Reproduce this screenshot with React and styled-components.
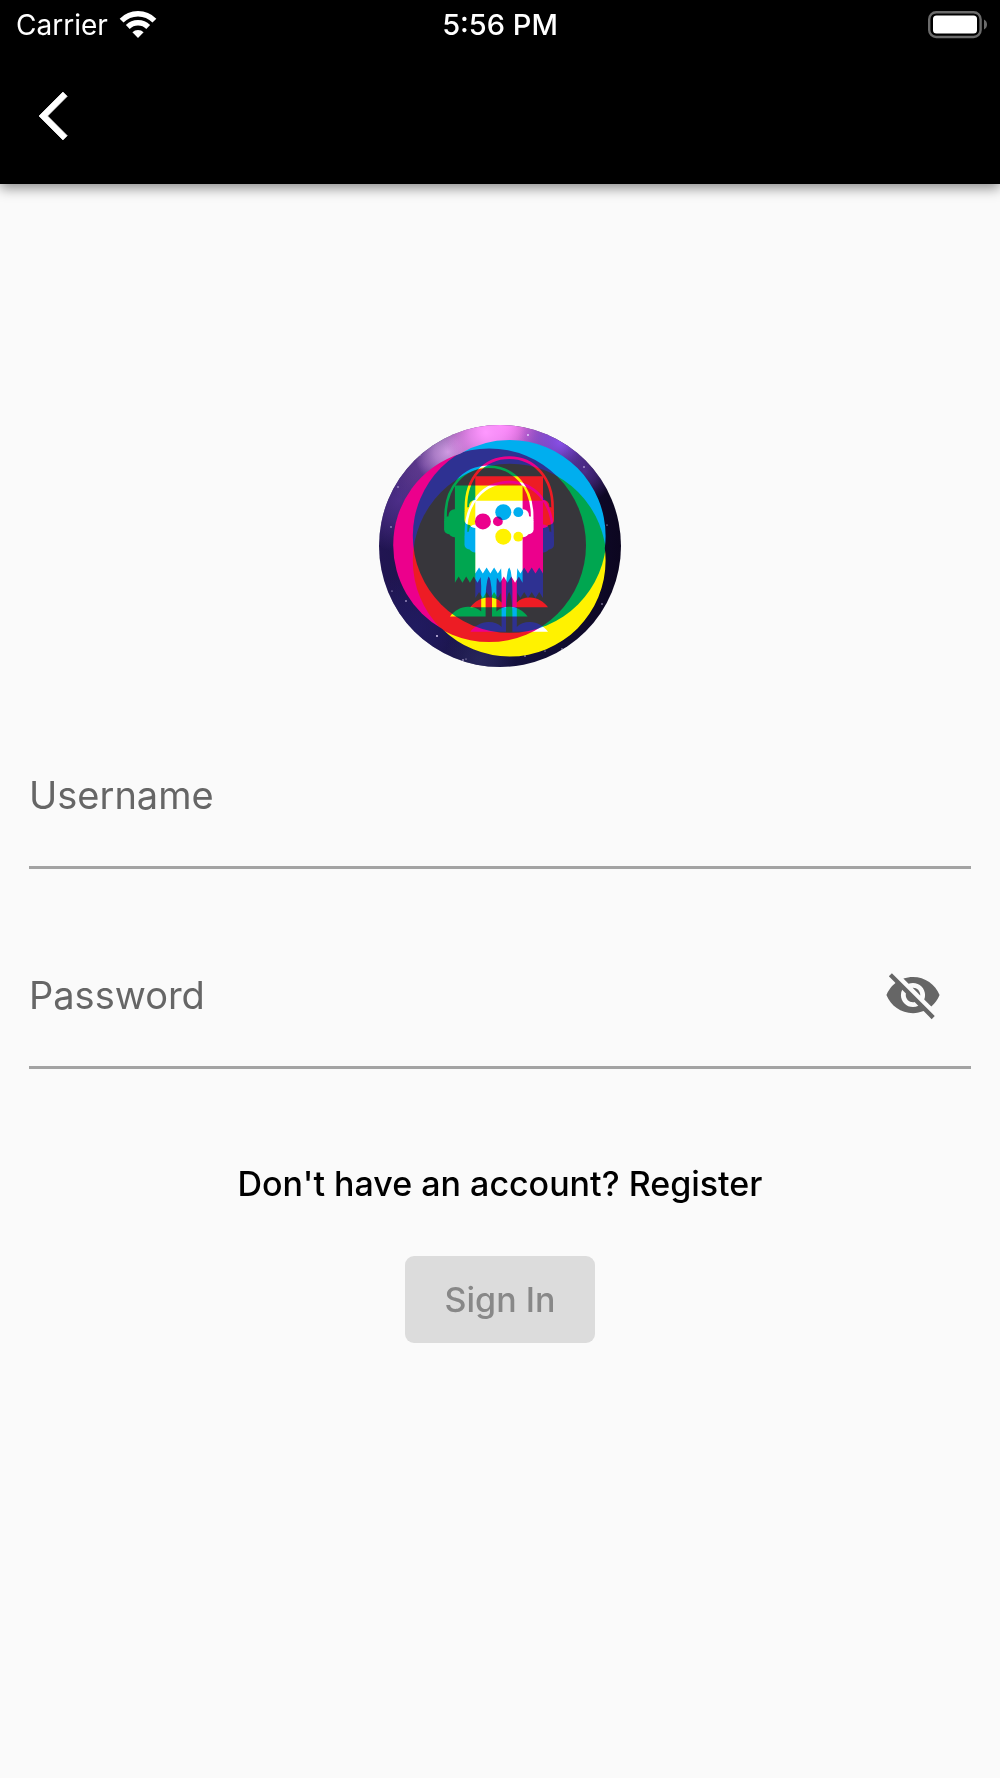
import { useState } from 'react'
import styled, { createGlobalStyle } from 'styled-components'
import { MdVisibility, MdVisibilityOff } from 'react-icons/md'

const GlobalStyle = createGlobalStyle`
  * {
    box-sizing: border-box;
  }
  body {
    margin: 0;
    background: #fafafa;
    font-family: Inter, 'Liberation Sans', sans-serif;
  }
`

const Page = styled.div`
  min-height: 100vh;
  background: #fafafa;
`

const Header = styled.header`
  height: 184px;
  background: #000;
  color: #fff;
  box-shadow: 0 4px 12px rgba(0, 0, 0, 0.45);
`

const StatusBar = styled.div`
  display: grid;
  grid-template-columns: 1fr auto 1fr;
  align-items: center;
  height: 50px;
  padding: 0 12px;
  font-size: 28px;
  line-height: 36px;
`

const Carrier = styled.div`
  display: flex;
  align-items: center;
  gap: 11px;
  padding-left: 4px;
`

const Time = styled.time`
  font-size: 29px;
  font-weight: 500;
`

const Battery = styled.svg`
  justify-self: end;
`

const NavBar = styled.nav`
  display: flex;
  align-items: center;
  height: 132px;
  padding: 0 39px;
`

const IconButton = styled.button`
  display: flex;
  padding: 0;
  border: 0;
  background: none;
  color: ${({ $color }) => $color};
  cursor: pointer;
`

const Form = styled.form`
  display: flex;
  flex-direction: column;
  align-items: center;
  padding: 241px 29px 80px;
`

const Logo = styled.svg`
  display: block;
  width: 242px;
  height: 242px;
  margin-bottom: 67px;
`

const InkLayer = styled.g`
  mix-blend-mode: plus-lighter;
`

const Field = styled.div`
  display: grid;
  grid-template-columns: 1fr auto;
  align-items: center;
  width: 100%;
  height: 135px;
  margin-bottom: 65px;
  padding: 0 29px 10px 0;
  border-bottom: 3px solid #a3a3a3;
  font-size: 38px;
  line-height: 48px;
`

const Label = styled.label`
  grid-area: 1 / 1;
  color: #666;
  visibility: ${({ $filled }) => ($filled ? 'hidden' : 'visible')};
`

const Input = styled.input`
  grid-area: 1 / 1;
  width: 100%;
  padding: 0;
  border: 0;
  outline: 0;
  background: none;
  color: #222;
  font: inherit;
`

const RegisterLink = styled.a`
  margin-top: 30px;
  color: #000;
  font-size: 34px;
  font-weight: 500;
  line-height: 40px;
  text-decoration: none;
`

const SubmitButton = styled.button`
  height: 87px;
  margin-top: 52px;
  padding: 0 40px;
  border: 0;
  border-radius: 9px;
  background: #dcdcdc;
  color: #888;
  font: inherit;
  font-size: 34px;
  font-weight: 500;
`

const WifiIcon = () => (
  <svg width="38" height="28" viewBox="0 0 38 28" fill="none" stroke="#fff" strokeWidth="5.4">
    <path d="M2.6 9.6a23 23 0 0 1 32.8 0" />
    <path d="M8.8 16a14.4 14.4 0 0 1 20.4 0" />
    <path d="M13.4 21.2a8 8 0 0 1 11.2 0L19 27z" fill="#fff" stroke="none" />
  </svg>
)

const BatteryIcon = () => (
  <Battery width="60" height="28" viewBox="0 0 60 28" role="img" aria-label="Battery full">
    <rect x="1.2" y="1.2" width="51.4" height="24.8" rx="7" fill="none" stroke="#6b6b6b" strokeWidth="2.4" />
    <rect x="5" y="4.5" width="44" height="18" rx="3.5" fill="#fff" />
    <path d="M56 8.5v10q3-1.6 3-5t-3-5z" fill="#6b6b6b" />
  </Battery>
)

const BackIcon = () => (
  <svg width="58" height="58" viewBox="0 0 24 24" fill="currentColor">
    <path d="M11.67 3.87 9.9 2.1 0 12l9.9 9.9 1.77-1.77L3.54 12z" stroke="currentColor" strokeWidth="0.3" />
  </svg>
)

// one figure per ink, each shifted and cut out of its own disc
const inks = {
  r: { dx: 0, dy: 0 },
  g: { dx: -20.4, dy: 9.2 },
  b: { dx: 0, dy: 24.5 },
}

const teeth = Array.from({ length: 9 }, (_, i) => {
  const x = 543 - i * 7.52
  return `L${x} 573.6L${x - 3.76} 567.4`
}).join('')

const Leg = () => (
  <path d="M500.6 560H508.6V567Q506 577 506 590V607.2H470.4C475 601.5 481 597.6 488.5 597.6C494 597.6 498.5 599.6 501.6 602.4V577z" />
)

const Figure = ({ color, hole }) => (
  <>
    <g fill={color}>
      <path d={`M475.3 476.3H543${teeth}L475.3 573.6z`} />
      <rect x="469" y="500" width="14" height="28" rx="6" />
      <rect x="464.5" y="507" width="14" height="18" rx="5" />
      <rect x="535.4" y="500" width="14" height="28" rx="6" />
      <rect x="540" y="507" width="14" height="18" rx="5" />
      <Leg />
      <g transform="matrix(-1 0 0 1 1018.4 0)">
        <Leg />
      </g>
    </g>
    <path
      d="M466 511C464.5 477 485 457.6 509.2 457.6S554 477 552.5 511"
      fill="none"
      stroke={color}
      strokeWidth="2.6"
    />
    <circle cx="503.3" cy="512.2" r="8" fill={hole} />
    <circle cx="518.3" cy="512.2" r="4.9" fill={hole} />
  </>
)

const InkMask = ({ id, dx, dy, on, off }) => (
  <mask id={id} maskUnits="userSpaceOnUse" x="379" y="425" width="242" height="242">
    <rect x="379" y="425" width="242" height="242" fill={on} />
    <g transform={`translate(${dx} ${dy})`}>
      <circle cx="509.6" cy="536" r="96.8" fill={off} />
      <Figure color={on} hole={off} />
    </g>
  </mask>
)

const overlaps = [
  ['', '#37363b'],
  ['r', '#ed1c24'],
  ['g', '#00a650'],
  ['b', '#2e3192'],
  ['rg', '#fff200'],
  ['gb', '#00aeef'],
  ['rb', '#ec008c'],
  ['rgb', '#ffffff'],
]

const Overlap = ({ keys, color }) => (
  <InkLayer>
    {Object.keys(inks).reduce(
      (child, key) => <g mask={`url(#${keys.includes(key) ? 'ink' : 'no'}-${key})`}>{child}</g>,
      <rect x="379" y="425" width="242" height="242" fill={color} />
    )}
  </InkLayer>
)

const glows = [
  [400, 500, 52, '#52318f', 0.9],
  [425, 465, 42, '#694099', 0.9],
  [448, 452, 34, '#e0a8f0', 0.9],
  [505, 424, 66, '#ff7dfa', 1],
  [486, 432, 40, '#ff98ff', 1],
  [560, 442, 42, '#8950e8', 1],
  [585, 472, 30, '#5a329c', 0.8],
  [415, 627, 55, '#211b62', 0.9],
  [480, 660, 36, '#2d2c63', 0.7],
]

const stars = [
  [391, 527, 0.7], [406, 601, 0.8], [437, 636, 0.9], [398, 487, 0.7], [528, 435, 0.9],
  [584, 467, 0.8], [607, 525, 0.6], [602, 604, 0.7], [562, 649, 0.7], [525, 656, 0.7],
  [463, 660, 0.8], [466, 659, 0.6], [392, 591, 0.6], [420, 455, 0.6], [545, 651, 0.6],
]

const BandLogo = () => (
  <Logo viewBox="379 425 242 242" role="img" aria-label="Logo">
    <defs>
      <clipPath id="badge">
        <circle cx="500" cy="546" r="121" />
      </clipPath>
      <clipPath id="discs">
        <circle cx="489.2" cy="545.2" r="96" />
        <circle cx="509.6" cy="536" r="96" />
        <circle cx="509.6" cy="560.5" r="96" />
      </clipPath>
      <linearGradient id="space" x1="0" y1="0" x2="1" y2="0">
        <stop offset="0" stopColor="#211552" />
        <stop offset="0.5" stopColor="#151341" />
        <stop offset="1" stopColor="#0c0620" />
      </linearGradient>
      {glows.map(([, , , color, opacity], i) => (
        <radialGradient key={i} id={`glow-${i}`}>
          <stop offset="0" stopColor={color} stopOpacity={opacity} />
          <stop offset="0.4" stopColor={color} stopOpacity={opacity * 0.7} />
          <stop offset="1" stopColor={color} stopOpacity="0" />
        </radialGradient>
      ))}
      {Object.entries(inks).map(([key, shift]) => (
        <g key={key}>
          <InkMask id={`ink-${key}`} {...shift} on="#fff" off="#000" />
          <InkMask id={`no-${key}`} {...shift} on="#000" off="#fff" />
        </g>
      ))}
    </defs>
    <g clipPath="url(#badge)">
      <rect x="379" y="425" width="242" height="242" fill="url(#space)" />
      {glows.map(([x, y, r], i) => (
        <circle key={i} cx={x} cy={y} r={r} fill={`url(#glow-${i})`} />
      ))}
      {stars.map(([x, y, r], i) => (
        <circle key={i} cx={x} cy={y} r={r} fill="#e6d9ff" />
      ))}
    </g>
    <g clipPath="url(#discs)">
      {overlaps.map(([keys, color]) => (
        <Overlap key={color} keys={keys} color={color} />
      ))}
    </g>
  </Logo>
)

const App = () => {
  const [username, setUsername] = useState('')
  const [password, setPassword] = useState('')
  const [visible, setVisible] = useState(false)

  return (
    <Page>
      <GlobalStyle />
      <Header>
        <StatusBar>
          <Carrier>
            Carrier
            <WifiIcon />
          </Carrier>
          <Time>5:56 PM</Time>
          <BatteryIcon />
        </StatusBar>
        <NavBar>
          <IconButton type="button" aria-label="Back" $color="#fff">
            <BackIcon />
          </IconButton>
        </NavBar>
      </Header>
      <Form onSubmit={(e) => e.preventDefault()}>
        <BandLogo />
        <Field>
          <Label htmlFor="username" $filled={username !== ''}>
            Username
          </Label>
          <Input id="username" value={username} onChange={(e) => setUsername(e.target.value)} />
        </Field>
        <Field>
          <Label htmlFor="password" $filled={password !== ''}>
            Password
          </Label>
          <Input
            id="password"
            type={visible ? 'text' : 'password'}
            value={password}
            onChange={(e) => setPassword(e.target.value)}
          />
          <IconButton
            type="button"
            aria-label="Toggle password visibility"
            $color="#666"
            onClick={() => setVisible(!visible)}
          >
            {visible ? <MdVisibility size={58} /> : <MdVisibilityOff size={58} />}
          </IconButton>
        </Field>
        <RegisterLink href="#register">Don't have an account? Register</RegisterLink>
        <SubmitButton type="submit" disabled={!username || !password}>
          Sign In
        </SubmitButton>
      </Form>
    </Page>
  )
}

export default App
